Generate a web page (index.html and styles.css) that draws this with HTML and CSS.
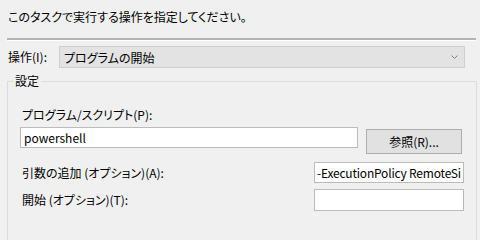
FILE: index.html
```html
<!DOCTYPE html>
<html lang="ja">
<head>
<meta charset="utf-8">
<link rel="stylesheet" href="styles.css">
</head>
<body>
<div class="page">
  <p class="intro">このタスクで実行する操作を指定してください。</p>
  <div class="sep"></div>
  <div class="action-row">
    <span class="label">操作(I):</span>
    <div class="combo">
      <span>プログラムの開始</span>
      <svg class="chev" width="7" height="4" viewBox="0 0 7 4"><polyline points="0.5,0.5 3.5,3.5 6.5,0.5" fill="none" stroke="#808080" stroke-width="1"/></svg>
    </div>
  </div>
  <fieldset class="group">
    <legend>設定</legend>
    <div class="label prog-label">プログラム/スクリプト(P):</div>
    <div class="prog-row">
      <div class="input prog">powershell</div>
      <button class="btn">参照(R)...</button>
    </div>
    <div class="arg-row">
      <span class="label">引数の追加 (オプション)(A):</span>
      <div class="input arg args-text">-ExecutionPolicy RemoteSi</div>
    </div>
    <div class="arg-row start-row">
      <span class="label">開始 (オプション)(T):</span>
      <div class="input arg"></div>
    </div>
  </fieldset>
</div>
</body>
</html>
```
FILE: styles.css
```css
html, body {
  margin: 0;
  padding: 0;
  background: #f0f0f0;
}
body {
  width: 480px;
  height: 240px;
  overflow: hidden;
  font-family: "Noto Sans CJK JP", "Noto Sans", sans-serif;
  font-size: 12px;
  color: #000;
  font-feature-settings: "palt";
}
.page {
  display: flex;
  flex-direction: column;
  padding: 8px 0 0 0;
}
.intro {
  margin: 0 0 0 8px;
  line-height: 18px;
  height: 18px;
}
.sep {
  margin: 12px 4px 0 7px;
  border-top: 2px solid #b4b4b4;
  border-bottom: 1px solid #ffffff;
}
.action-row {
  display: flex;
  align-items: center;
  margin: 5px 0 0 8px;
  height: 22px;
}
.label {
  line-height: 18px;
  white-space: nowrap;
}
.action-row .label {
  width: 51px;
}
.combo {
  box-sizing: border-box;
  width: 406px;
  height: 22px;
  background: #e3e3e3;
  border: 1px solid #cfcfcf;
  display: flex;
  align-items: center;
  justify-content: space-between;
  padding: 0 6px 0 4px;
}
.chev {
  display: block;
}
.group {
  margin: 6px 3px 0 7px;
  border: 1px solid #dcdcdc;
  padding: 0 12px 40px 12px;
  min-width: 0;
}
.group legend {
  margin-left: -7px;
  padding: 0 2px;
  line-height: 14px;
}
.prog-label {
  margin: 18px 0 0 2px;
}
.prog-row {
  display: flex;
  align-items: flex-start;
  margin-top: 3px;
}
.input {
  box-sizing: border-box;
  background: #fff;
  border: 1px solid #bcbcbc;
  white-space: nowrap;
  overflow: hidden;
  line-height: 19px;
}
.prog {
  width: 338px;
  height: 21px;
  padding: 0 3px;
}
.btn {
  box-sizing: border-box;
  margin: 2px 0 0 8px;
  width: 96px;
  height: 25px;
  background: #e1e1e1;
  border: 1px solid #adadad;
  border-radius: 0;
  font: inherit;
  color: #000;
  padding: 0;
}
.arg-row {
  display: flex;
  align-items: center;
  justify-content: space-between;
  margin-top: 8px;
  padding-left: 2px;
}
.start-row {
  margin-top: 6px;
}
.arg {
  width: 150px;
  height: 21px;
  padding: 0 2px;
}
.args-text {
  letter-spacing: -0.2px;
}
.start-row .arg {
  height: 22px;
}
```
